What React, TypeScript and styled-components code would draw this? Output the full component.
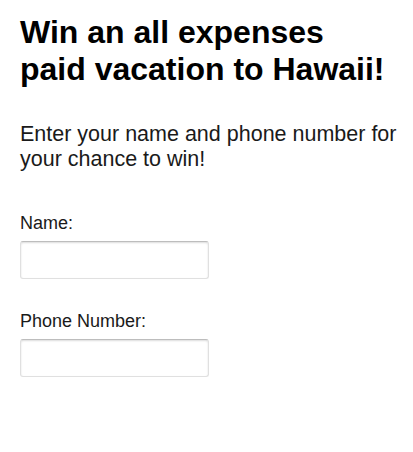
import React from 'react';
import styled, {createGlobalStyle} from 'styled-components';

const GlobalStyle = createGlobalStyle`
  html, body {
    margin: 0;
    padding: 0;
    background: #ffffff;
  }
  body {
    font-family: "Liberation Sans", Arial, sans-serif;
    color: #000000;
  }
`;

const Page = styled.div`
  display: flex;
  flex-direction: column;
  padding: 14px 8px 0 20px;
`;

const Title = styled.h1`
  margin: 0;
  font-size: 32px;
  line-height: 37px;
  font-weight: 700;
  color: #000000;
`;

const Intro = styled.p`
  margin: 34px 0 0 0;
  font-size: 21.5px;
  line-height: 25px;
  color: #1a1a1a;
`;

const Form = styled.form`
  display: flex;
  flex-direction: column;
  gap: 32px;
  margin-top: 41px;
`;

const Field = styled.div`
  display: flex;
  flex-direction: column;
  align-items: flex-start;
`;

const Label = styled.label`
  font-size: 18px;
  line-height: 20px;
  color: #1a1a1a;
  margin-bottom: 8px;
`;

const Input = styled.input`
  box-sizing: border-box;
  width: 189px;
  height: 38px;
  border: 1px solid #e0e0e0;
  border-top-color: #bdbdbd;
  border-radius: 3px;
  box-shadow: inset 0 1px 2px rgba(0, 0, 0, 0.14);
  outline: none;
  font-size: 16px;
  padding: 4px 8px;
  background: #ffffff;
`;

export default function App() {
  return (
    <>
      <GlobalStyle />
      <Page>
        <Title>
          Win an all expenses
          <br />
          paid vacation to Hawaii!
        </Title>
        <Intro>
          Enter your name and phone number for your chance to win!
        </Intro>
        <Form>
          <Field>
            <Label htmlFor="name">Name:</Label>
            <Input id="name" type="text" />
          </Field>
          <Field>
            <Label htmlFor="phone">Phone Number:</Label>
            <Input id="phone" type="tel" />
          </Field>
        </Form>
      </Page>
    </>
  );
}
